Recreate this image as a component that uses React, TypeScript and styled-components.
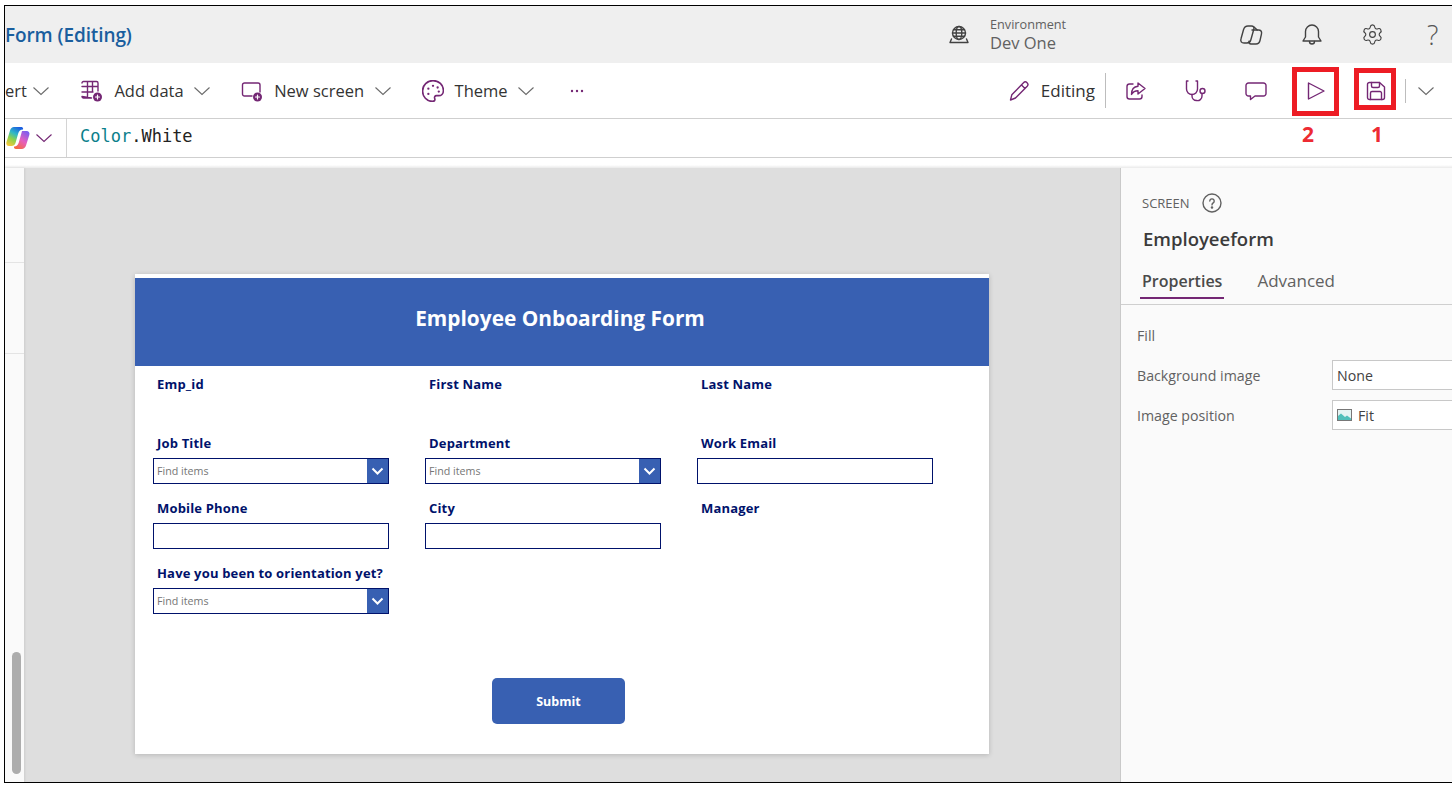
import styled, { createGlobalStyle } from "styled-components";
import { Settings } from "lucide-react";

const purple = "#742774";
const navy = "#00126b";
const brand = "#3860b2";

const GlobalStyle = createGlobalStyle`
  html, body {
    margin: 0;
    background: #fff;
  }
  body {
    font-family: "Open Sans", "Liberation Sans", sans-serif;
    color: #242424;
  }
`;

const Frame = styled.div`
  box-sizing: border-box;
  display: flex;
  flex-direction: column;
  width: 1448px;
  height: 778px;
  margin: 5px 0 0 4px;
  border: 1px solid #000;
  border-right: none;
  overflow: hidden;
`;

const Header = styled.header`
  display: flex;
  align-items: center;
  flex: 0 0 57px;
  background: #efefef;
`;

const AppTitle = styled.div`
  flex: 1;
  font-size: 19px;
  font-weight: 600;
  letter-spacing: -0.1px;
  color: #1a5e9e;
`;

const Environment = styled.div`
  display: flex;
  align-items: center;
  gap: 21px;
  width: 271px;
`;

const EnvText = styled.div`
  display: flex;
  flex-direction: column;
  color: #616161;
`;

const EnvLabel = styled.span`
  font-size: 12.7px;
  line-height: 16px;
`;

const EnvName = styled.span`
  font-size: 16.5px;
  line-height: 22px;
`;

const HeaderIcon = styled.div`
  display: flex;
  align-items: center;
  justify-content: center;
  width: 61px;
  color: #424242;
`;

const HelpSlot = styled.div`
  box-sizing: border-box;
  width: 49px;
  padding-left: 24px;
`;

const HelpMark = styled.span`
  font-size: 27px;
  font-weight: 300;
  line-height: 30px;
  color: #555;
`;

const Toolbar = styled.div`
  display: flex;
  align-items: center;
  justify-content: space-between;
  flex: 0 0 56px;
  box-sizing: border-box;
  border-bottom: 1px solid #cfcfcf;
  padding-right: 17.5px;
`;

const ToolGroup = styled.div`
  display: flex;
  align-items: center;
  height: 100%;
`;

const ClippedItem = styled.div`
  display: flex;
  align-items: center;
  gap: 9px;
  margin-right: 31px;
  font-size: 16.5px;
  color: #333;
`;

const ToolItem = styled.div`
  display: flex;
  align-items: center;
  gap: 11px;
  margin-right: 30px;
  font-size: 16.5px;
  color: #333;
`;

const ToolLabel = styled.span`
  margin-right: 2px;
`;

const MoreSlot = styled.div`
  margin-left: 5px;
`;

const Chevron = styled.svg<{ $tone?: string }>`
  display: block;
  flex: none;
  margin-left: -3.5px;
  fill: none;
  stroke: ${({ $tone }) => $tone ?? "#6b6b6b"};
  stroke-width: 1.1;
`;

const Divider = styled.div<{ $h: number }>`
  width: 1px;
  height: ${({ $h }) => $h}px;
  background: #bdbdbd;
`;

const EditingLabel = styled.div`
  display: flex;
  align-items: center;
  gap: 11px;
  margin-right: 10px;
  font-size: 17px;
  color: #333;
`;

const ActionSlot = styled.div`
  position: relative;
  display: flex;
  align-items: center;
  justify-content: center;
  width: 60px;
  height: 100%;
`;

const Highlight = styled.div<{ $left: number; $top: number; $w: number; $h: number }>`
  position: absolute;
  box-sizing: border-box;
  left: ${({ $left }) => $left}px;
  top: ${({ $top }) => $top}px;
  width: ${({ $w }) => $w}px;
  height: ${({ $h }) => $h}px;
  border: 5px solid #ed1c24;
`;

const StepNumber = styled.span<{ $left: number }>`
  position: absolute;
  left: ${({ $left }) => $left}px;
  width: 60px;
  top: 56px;
  text-align: center;
  font-size: 21px;
  font-weight: 700;
  line-height: 30px;
  color: #ed2b33;
`;

const CollapseSlot = styled.div`
  display: flex;
  align-items: center;
  gap: 14px;
  margin-left: -1px;
`;

const FormulaBar = styled.div`
  display: flex;
  align-items: center;
  flex: 0 0 39px;
  box-sizing: border-box;
  border-bottom: 1px solid #cfcfcf;
`;

const FormulaPicker = styled.div`
  display: flex;
  align-items: center;
  gap: 8.5px;
  box-sizing: border-box;
  width: 62px;
  height: 100%;
  padding-left: 1px;
  border-right: 1px solid #d4d4d4;
`;

const FormulaText = styled.code`
  margin: 0 0 5px 13px;
  font-family: "DejaVu Sans Mono", "Liberation Mono", monospace;
  font-size: 17px;
  color: #222;
`;

const FormulaIdent = styled.span`
  color: #0b7f8c;
`;

const ShadowGap = styled.div`
  flex: 0 0 10px;
  background: linear-gradient(#fff 70%, #e9e9e9);
`;

const Main = styled.main`
  display: flex;
  flex: 1;
  min-height: 0;
`;

const Rail = styled.aside`
  position: relative;
  display: flex;
  flex-direction: column;
  flex: 0 0 19px;
  background: #fafafa;
  box-shadow: 1px 0 2px rgba(0, 0, 0, 0.08);
`;

const RailRow = styled.div<{ $h: number }>`
  height: ${({ $h }) => $h}px;
  border-bottom: 1px solid #e4e4e4;
`;

const RailThumb = styled.div`
  width: 9px;
  height: 122px;
  margin: auto 0 8px 7px;
  border-radius: 5px;
  background: #adadad;
`;

const Canvas = styled.section`
  flex: 0 0 1096px;
  box-sizing: border-box;
  padding: 106px 0 0 111px;
  background: #dedede;
`;

const FormCard = styled.div`
  box-sizing: border-box;
  width: 854px;
  height: 480px;
  padding-top: 4px;
  background: #fff;
  box-shadow: 0 1px 5px rgba(0, 0, 0, 0.18);
`;

const FormTitle = styled.h1`
  box-sizing: border-box;
  display: flex;
  align-items: center;
  justify-content: center;
  height: 88px;
  margin: 0;
  padding: 0 4px 8px 0;
  background: ${brand};
  color: #fff;
  font-size: 20.85px;
  font-weight: 700;
`;

const FieldGrid = styled.div`
  display: grid;
  grid-template-columns: repeat(3, 272px);
  grid-template-rows: 59px 65px 65px 65px;
  padding: 8px 0 0 18px;
`;

const Field = styled.div`
  display: flex;
  flex-direction: column;
`;

const FieldLabel = styled.label`
  height: 20px;
  padding-left: 4px;
  font-size: 13px;
  font-weight: 700;
  line-height: 20px;
  letter-spacing: 0.17px;
  color: ${navy};
`;

const TextBox = styled.div`
  box-sizing: border-box;
  width: 236px;
  height: 26px;
  margin-top: 5px;
  border: 1px solid ${navy};
  background: #fff;
`;

const ComboBox = styled(TextBox)`
  display: flex;
  align-items: center;
  justify-content: space-between;
  padding-left: 3px;
  font-size: 10.7px;
  color: #767676;
`;

const ComboButton = styled.span`
  display: flex;
  align-items: center;
  justify-content: center;
  width: 21px;
  height: 100%;
  background: ${brand};
`;

const SubmitRow = styled.div`
  display: flex;
  margin: 50px 0 0 357px;
`;

const SubmitButton = styled.button`
  width: 133px;
  height: 46px;
  border: none;
  border-radius: 5px;
  background: ${brand};
  color: #fff;
  font-family: inherit;
  font-size: 12.5px;
  font-weight: 700;
`;

const Panel = styled.aside`
  flex: 1;
  box-sizing: border-box;
  padding-top: 24px;
  background: #fafafa;
  border-left: 1px solid #c9c9c9;
`;

const PanelHead = styled.div`
  padding-left: 21px;
`;

const ScreenTag = styled.div`
  display: flex;
  align-items: center;
  gap: 12px;
  height: 22px;
  font-size: 13px;
  color: #616161;
`;

const ScreenName = styled.div`
  margin-top: 13px;
  padding-left: 1px;
  font-size: 18.5px;
  font-weight: 600;
  line-height: 24px;
  color: #3b3b3b;
`;

const Tabs = styled.div`
  display: flex;
  gap: 31px;
  height: 38px;
  margin-top: 15px;
  padding-left: 19px;
  border-bottom: 1px solid #cfcfcf;
`;

const Tab = styled.div<{ $active?: boolean }>`
  box-sizing: border-box;
  height: 33px;
  padding: 3px 2px 0;
  border-bottom: 2px solid ${({ $active }) => ($active ? purple : "transparent")};
  font-size: ${({ $active }) => ($active ? 16 : 17)}px;
  line-height: 24px;
  font-weight: ${({ $active }) => ($active ? 600 : 400)};
  color: ${({ $active }) => ($active ? "#4a4a4a" : "#616161")};
`;

const PropertyList = styled.div`
  display: flex;
  flex-direction: column;
  gap: 10px;
  padding: 15px 0 0 16px;
`;

const PropertyRow = styled.div`
  display: flex;
  align-items: center;
  height: 30px;
  font-size: 14.2px;
  color: #616161;
`;

const PropertyName = styled.span`
  flex: 0 0 195px;
  padding-top: 1px;
`;

const PropertyValue = styled.div`
  display: flex;
  align-items: center;
  gap: 6px;
  box-sizing: border-box;
  flex: 1;
  height: 30px;
  padding-left: 4px;
  border: 1px solid #c8c8c8;
  border-right: none;
  background: #fff;
  color: #424242;
`;

const IconSvg = styled.svg<{ $tone?: string }>`
  display: block;
  flex: none;
  fill: none;
  stroke: ${({ $tone }) => $tone ?? purple};
  stroke-width: 1.4;
  stroke-linecap: round;
  stroke-linejoin: round;
`;

const Down = ({ tone, size = 18 }: { tone?: string; size?: number }) => (
  <Chevron $tone={tone} width={size} height={size} viewBox="0 0 18 18">
    <path d="M1.5 5.5 9 12.5l7.5-7" />
  </Chevron>
);

const Badge = () => (
  <>
    <circle cx="16.5" cy="17" r="4.5" fill={purple} stroke="none" />
    <path d="M16.5 15v4M14.5 17h4" stroke="#fff" strokeWidth="1.2" />
  </>
);

const TableAddIcon = () => (
  <IconSvg width="22" height="22" viewBox="0 0 22 22">
    <path d="M1 3A1.5 1.5 0 0 1 2.500 1.500h13A1.500 1.500 0 0 1 17 3v8M10.500 18H2.500A1.500 1.500 0 0 1 1 16.500zM1 6.500h16M1 12h11M6.500 1.500V18M11.500 1.500V12" />
    <Badge />
  </IconSvg>
);

const ScreenAddIcon = () => (
  <IconSvg width="22" height="22" viewBox="0 0 22 22">
    <path d="M11 16H3.500A2 2 0 0 1 1.500 14V5A2 2 0 0 1 3.500 3H17A2 2 0 0 1 19 5v7" />
    <Badge />
  </IconSvg>
);

const PaletteIcon = () => (
  <IconSvg width="22" height="22" viewBox="1.500 1.500 19 19">
    <path d="M11 2c5 0 9 3.800 9 8.500 0 3-2 4.500-4 4.500h-2c-1.500 0-2 1.200-1.500 2.500.5 1.500-.3 2.500-2 2.500C5.500 20 2 15.800 2 11c0-5 4-9 9-9z" />
    <circle cx="7" cy="9" r="1" fill={purple} stroke="none" />
    <circle cx="11" cy="6.500" r="1" fill={purple} stroke="none" />
    <circle cx="15" cy="8" r="1" fill={purple} stroke="none" />
    <circle cx="16" cy="11.500" r="1" fill={purple} stroke="none" />
    <circle cx="7" cy="13.500" r="1" fill={purple} stroke="none" />
  </IconSvg>
);

const DotsIcon = () => (
  <IconSvg width="14" height="4" viewBox="0 0 14 4">
    <circle cx="2" cy="2" r="1.200" fill={purple} stroke="none" />
    <circle cx="7" cy="2" r="1.200" fill={purple} stroke="none" />
    <circle cx="12" cy="2" r="1.200" fill={purple} stroke="none" />
  </IconSvg>
);

const PencilIcon = () => (
  <IconSvg width="22" height="22" viewBox="0 0 22 22">
    <path d="M15.500 2.800a2.500 2.500 0 0 1 3.700 3.400L7.500 18 2.500 20l1.300-5.200zM13.500 5l3.500 3.500" />
  </IconSvg>
);

const ShareIcon = () => (
  <IconSvg width="22" height="22" viewBox="0 0 22 22">
    <path d="M8 4H4.500A2.500 2.500 0 0 0 2 6.500v10A2.500 2.500 0 0 0 4.500 19h10a2.500 2.500 0 0 0 2.500-2.500V15" />
    <path d="M13 3l7 5.500-7 5.500v-3.200c-3 0-5 1-6.500 3.700 0-4.800 2.500-8 6.500-8.300z" />
  </IconSvg>
);

const StethoscopeIcon = () => (
  <IconSvg width="22" height="24" viewBox="0 0 22 24">
    <path d="M3 2H1.500v8a5.500 5.500 0 0 0 11 0V2H11" />
    <path d="M7 15.500V17a4.500 4.500 0 0 0 4.500 4.500A4.500 4.500 0 0 0 17 17v-2.500" />
    <circle cx="17.500" cy="12" r="2.500" />
  </IconSvg>
);

const CommentIcon = () => (
  <IconSvg width="22" height="22" viewBox="0 0 22 22">
    <path d="M3.500 3h15A2.500 2.500 0 0 1 21 5.500v8a2.500 2.500 0 0 1-2.500 2.500H10l-4.500 3.500V16h-2A2.500 2.500 0 0 1 1 13.500v-8A2.500 2.500 0 0 1 3.500 3z" />
  </IconSvg>
);

const PlayIcon = () => (
  <IconSvg width="20" height="20" viewBox="0 0 20 20">
    <path d="M2.500 2 18 10 2.500 18z" />
  </IconSvg>
);

const SaveIcon = () => (
  <IconSvg width="20" height="20" viewBox="0 0 20 20">
    <path d="M1.500 3.500a2 2 0 0 1 2-2h10L18.500 6v10.500a2 2 0 0 1-2 2h-13a2 2 0 0 1-2-2z" />
    <path d="M5.500 1.500V5a1.500 1.500 0 0 0 1.500 1.500h5A1.500 1.500 0 0 0 13.500 5V1.500M4.500 18.500V12a1.500 1.500 0 0 1 1.500-1.500h8a1.500 1.500 0 0 1 1.500 1.500v6.500" />
  </IconSvg>
);

const GlobeIcon = () => (
  <IconSvg $tone="#424242" width="20" height="20" viewBox="0 0 20 20">
    <circle cx="10" cy="8" r="6.500" />
    <ellipse cx="10" cy="8" rx="2.800" ry="6.500" />
    <path d="M3.500 8h13M4.500 4.800h11M4.500 11.200h11M2.500 14l-1.500 3.500h18L17.500 14" />
  </IconSvg>
);

const CopilotMonoIcon = () => (
  <IconSvg $tone="#424242" width="24" height="22" viewBox="0 0 24 22">
    <path d="M9 2h3.500c2 0 2.800 1.500 2.300 3.200l-3 10.800C11.300 18 10 19 8 19H5c-2.500 0-3.800-1.800-3-4.200l2.500-9C5.200 3.300 6.800 2 9 2z" />
    <path d="M13 6h6.500c2.300 0 3.500 1.500 3 3.800l-1.500 6.700C20.400 19 19 20 17 20h-5c-1.500 0-2.500-1-2-2.800" />
    <path d="M15 3l3.200 3" />
  </IconSvg>
);

const BellIcon = () => (
  <IconSvg $tone="#424242" width="22" height="24" viewBox="0 0 22 24">
    <path d="M11 2a6.500 6.500 0 0 0-6.500 6.500V14l-2.500 4h18l-2.500-4V8.500A6.500 6.500 0 0 0 11 2z" />
    <path d="M8.500 18.500a2.500 2.500 0 0 0 5 0" />
  </IconSvg>
);

const HelpRingIcon = () => (
  <IconSvg $tone="#616161" width="20" height="20" viewBox="0 0 20 20">
    <circle cx="10" cy="10" r="9" />
    <path d="M7.800 8a2.200 2.200 0 1 1 3.400 1.900c-.8.500-1.200 1-1.200 2" />
    <circle cx="10" cy="14.500" r=".6" fill="#616161" />
  </IconSvg>
);

const CopilotLogo = () => (
  <svg width="24" height="24" viewBox="0 0 24 24" style={{ display: "block", flex: "none" }}>
    <defs>
      <linearGradient id="copilotLeft" x1="0.7" y1="0" x2="0.2" y2="1">
        <stop offset="0" stopColor="#1b5fe0" />
        <stop offset="0.35" stopColor="#2fb8c8" />
        <stop offset="0.65" stopColor="#8ed24a" />
        <stop offset="1" stopColor="#f6c83a" />
      </linearGradient>
      <linearGradient id="copilotRight" x1="0.8" y1="0" x2="0.2" y2="1">
        <stop offset="0" stopColor="#7a5cf0" />
        <stop offset="0.5" stopColor="#e45fc0" />
        <stop offset="1" stopColor="#f7693b" />
      </linearGradient>
    </defs>
    <path d="M8 1h7c1.500 0 2.500 1 2 2.500-2.500 0-4 1.500-4.800 4L9.500 17c-.6 2-2 3-4 3H3c-2.200 0-3.200-1.700-2.500-4L4 4.500C4.700 2.300 6 1 8 1z" fill="url(#copilotLeft)" />
    <path d="M16 5h4.500c2.300 0 3.500 1.700 2.800 4L20 19.500C19.300 21.800 17.800 23 15.800 23H10c-1.500 0-2.500-1-1.800-2.500 2.300 0 3.800-1.500 4.500-3.800l2-7C15.300 8 15.500 6.500 16 5z" fill="url(#copilotRight)" />
  </svg>
);

const PictureIcon = () => (
  <svg width="15" height="12" viewBox="0 0 15 12" style={{ display: "block", flex: "none" }}>
    <rect x="0.500" y="0.500" width="14" height="11" fill="#e4f4f3" stroke="#777" />
    <path d="M1 11V7l3-2.500L8 8l2-1.500 4 3V11z" fill="#4fbfba" />
  </svg>
);

const ComboChevron = () => (
  <svg width="13" height="9" viewBox="0 0 13 9" style={{ display: "block" }}>
    <path d="M1.500 1.500 6.500 6.500l5-5" fill="none" stroke="#fff" strokeWidth="2" />
  </svg>
);

const Combo = () => (
  <ComboBox>
    Find items
    <ComboButton>
      <ComboChevron />
    </ComboButton>
  </ComboBox>
);

export default function App() {
  return (
    <>
      <GlobalStyle />
      <Frame>
        <Header>
          <AppTitle>Form (Editing)</AppTitle>
          <Environment>
            <GlobeIcon />
            <EnvText>
              <EnvLabel>Environment</EnvLabel>
              <EnvName>Dev One</EnvName>
            </EnvText>
          </Environment>
          <HeaderIcon>
            <CopilotMonoIcon />
          </HeaderIcon>
          <HeaderIcon>
            <BellIcon />
          </HeaderIcon>
          <HeaderIcon>
            <Settings size={23} strokeWidth={1.2} />
          </HeaderIcon>
          <HelpSlot>
            <HelpMark>?</HelpMark>
          </HelpSlot>
        </Header>

        <Toolbar>
          <ToolGroup>
            <ClippedItem>
              ert
              <Down />
            </ClippedItem>
            <ToolItem>
              <TableAddIcon />
              <ToolLabel>Add data</ToolLabel>
              <Down />
            </ToolItem>
            <ToolItem>
              <ScreenAddIcon />
              <ToolLabel>New screen</ToolLabel>
              <Down />
            </ToolItem>
            <ToolItem>
              <PaletteIcon />
              <ToolLabel>Theme</ToolLabel>
              <Down />
            </ToolItem>
            <MoreSlot>
              <DotsIcon />
            </MoreSlot>
          </ToolGroup>
          <ToolGroup>
            <EditingLabel>
              <PencilIcon />
              Editing
            </EditingLabel>
            <Divider $h={35} />
            <ActionSlot>
              <ShareIcon />
            </ActionSlot>
            <ActionSlot>
              <StethoscopeIcon />
            </ActionSlot>
            <ActionSlot>
              <CommentIcon />
            </ActionSlot>
            <ActionSlot>
              <PlayIcon />
              <Highlight $left={6} $top={4} $w={47} $h={49} />
              <StepNumber $left={-8}>2</StepNumber>
            </ActionSlot>
            <ActionSlot>
              <SaveIcon />
              <Highlight $left={8} $top={5} $w={42} $h={42} />
              <StepNumber $left={1}>1</StepNumber>
            </ActionSlot>
            <CollapseSlot>
              <Divider $h={24} />
              <Down />
            </CollapseSlot>
          </ToolGroup>
        </Toolbar>

        <FormulaBar>
          <FormulaPicker>
            <CopilotLogo />
            <Down tone={purple} />
          </FormulaPicker>
          <FormulaText>
            <FormulaIdent>Color</FormulaIdent>.White
          </FormulaText>
        </FormulaBar>
        <ShadowGap />

        <Main>
          <Rail>
            <RailRow $h={94} />
            <RailRow $h={90} />
            <RailThumb />
          </Rail>
          <Canvas>
            <FormCard>
              <FormTitle>Employee Onboarding Form</FormTitle>
              <FieldGrid>
                <Field>
                  <FieldLabel>Emp_id</FieldLabel>
                </Field>
                <Field>
                  <FieldLabel>First Name</FieldLabel>
                </Field>
                <Field>
                  <FieldLabel>Last Name</FieldLabel>
                </Field>
                <Field>
                  <FieldLabel>Job Title</FieldLabel>
                  <Combo />
                </Field>
                <Field>
                  <FieldLabel>Department</FieldLabel>
                  <Combo />
                </Field>
                <Field>
                  <FieldLabel>Work Email</FieldLabel>
                  <TextBox />
                </Field>
                <Field>
                  <FieldLabel>Mobile Phone</FieldLabel>
                  <TextBox />
                </Field>
                <Field>
                  <FieldLabel>City</FieldLabel>
                  <TextBox />
                </Field>
                <Field>
                  <FieldLabel>Manager</FieldLabel>
                </Field>
                <Field>
                  <FieldLabel>Have you been to orientation yet?</FieldLabel>
                  <Combo />
                </Field>
              </FieldGrid>
              <SubmitRow>
                <SubmitButton>Submit</SubmitButton>
              </SubmitRow>
            </FormCard>
          </Canvas>
          <Panel>
            <PanelHead>
              <ScreenTag>
                SCREEN
                <HelpRingIcon />
              </ScreenTag>
              <ScreenName>Employeeform</ScreenName>
            </PanelHead>
            <Tabs>
              <Tab $active>Properties</Tab>
              <Tab>Advanced</Tab>
            </Tabs>
            <PropertyList>
              <PropertyRow>
                <PropertyName>Fill</PropertyName>
              </PropertyRow>
              <PropertyRow>
                <PropertyName>Background image</PropertyName>
                <PropertyValue>None</PropertyValue>
              </PropertyRow>
              <PropertyRow>
                <PropertyName>Image position</PropertyName>
                <PropertyValue>
                  <PictureIcon />
                  Fit
                </PropertyValue>
              </PropertyRow>
            </PropertyList>
          </Panel>
        </Main>
      </Frame>
    </>
  );
}
